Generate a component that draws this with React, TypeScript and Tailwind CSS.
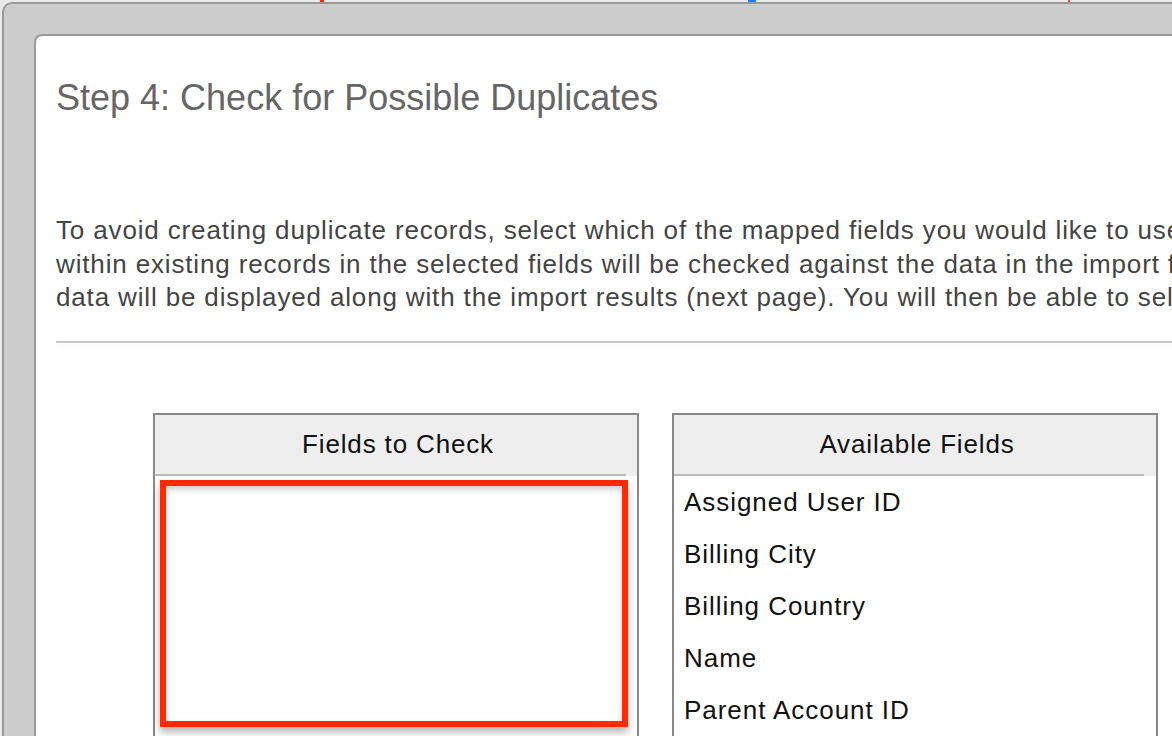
import React from "react";

const available = [
  "Assigned User ID",
  "Billing City",
  "Billing Country",
  "Name",
  "Parent Account ID",
  "Shipping City",
  "Shipping Country",
];

export default function App() {
  return (
    <div
      className="w-[1172px] h-[736px] overflow-hidden bg-[#e9e9e9] flex flex-col"
      style={{ fontFamily: '"Liberation Sans", Arial, Helvetica, sans-serif' }}
    >
      {/* top strip with cut-off descenders */}
      <div className="h-[2px] shrink-0 flex">
        <div className="w-[320px]" />
        <div className="w-[4px] bg-[#ff2200]" />
        <div className="w-[424px]" />
        <div className="w-[8px] bg-[#1a7cf0]" />
        <div className="w-[312px]" />
        <div className="w-[2px] bg-[#ff4040]" />
      </div>

      {/* outer gray frame */}
      <div className="ml-[2px] flex-1 min-h-0 w-[1400px] bg-[#cccccc] border-l-2 border-t-2 border-[#999999] rounded-tl-[10px] pl-[30px] pt-[30px]">
        {/* inner white panel */}
        <div className="h-full bg-white border-l-2 border-t-2 border-[#999999] rounded-tl-[8px] pl-[20px] pt-[42px]">
          <h1 className="text-[36px] leading-[40px] text-[#666666] font-normal whitespace-nowrap">
            Step 4: Check for Possible Duplicates
          </h1>

          <div className="mt-[96px] text-[26px] leading-[33.5px] tracking-[0.85px] text-[#444444] whitespace-nowrap">
            <div>
              To avoid creating duplicate records, select which of the mapped fields you would like to use to perform a duplicate check while data is being imported. Values
            </div>
            <div>
              within existing records in the selected fields will be checked against the data in the import file. If matching data is found, the rows in the import file containing the
            </div>
            <div>
              data will be displayed along with the import results (next page). You will then be able to select which of these rows to continue importing.
            </div>
          </div>

          <div className="mt-[26.5px] h-[2px] bg-[#cacaca] shadow-[0_3px_5px_rgba(0,0,0,0.06)]" />

          <div className="mt-[70px] ml-[97px] flex gap-[33px]">
            {/* Fields to Check */}
            <div className="w-[486px] h-[400px] border-2 border-[#888888] flex flex-col">
              <div className="bg-[#eeeeee] h-[59px] pl-[4px] text-center text-[26px] leading-[59px] tracking-[0.85px] text-[#111111]">
                Fields to Check
              </div>
              <div className="bg-[#eeeeee]">
                <div className="h-[2px] bg-[#bbbbbb] mr-[11px]" />
              </div>
              <div className="relative flex-1 bg-white">
                <div className="absolute left-[5px] top-[4px] w-[468px] h-[247px] border-[6px] border-[#ff2a00] shadow-[0_5px_8px_rgba(0,0,0,0.3),inset_0_3px_6px_rgba(0,0,0,0.22)]" />
              </div>
            </div>

            {/* Available Fields */}
            <div className="w-[486px] h-[400px] border-2 border-[#888888] flex flex-col">
              <div className="bg-[#eeeeee] h-[59px] pl-[4px] text-center text-[26px] leading-[59px] tracking-[0.85px] text-[#111111]">
                Available Fields
              </div>
              <div className="bg-[#eeeeee]">
                <div className="h-[2px] bg-[#bbbbbb] mr-[12px]" />
              </div>
              <div className="flex-1 bg-white flex flex-col pl-[10px]">
                {available.map((f) => (
                  <div key={f} className="h-[52px] text-[26px] leading-[52px] tracking-[0.95px] text-[#111111] whitespace-nowrap">
                    {f}
                  </div>
                ))}
              </div>
            </div>
          </div>
        </div>
      </div>
    </div>
  );
}
